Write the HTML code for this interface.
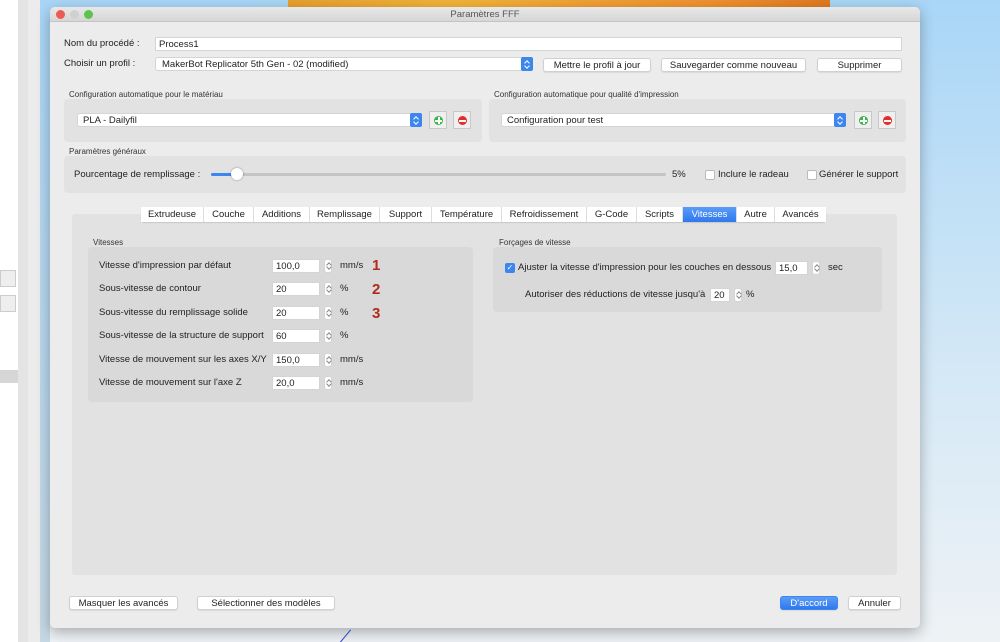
<!DOCTYPE html>
<html><head><meta charset="utf-8"><style>
*{box-sizing:border-box;margin:0;padding:0}
body{width:1000px;height:642px;overflow:hidden;position:relative;font-family:"Liberation Sans",sans-serif;font-size:9.5px;color:#222;background:linear-gradient(#a9d6f7,#d6e9f6 60%,#eef2f5)}
.a{position:absolute}
.t{position:absolute;white-space:nowrap;line-height:12px}
.inp{position:absolute;background:#fff;border:1px solid #d4d4d4;height:14px;padding-left:3px;line-height:13px}
.btn{position:absolute;background:#fff;border:1px solid #d0d0d0;border-radius:3px;height:14px;text-align:center;line-height:13px;box-shadow:0 1px 1px rgba(0,0,0,.08)}
.box{position:absolute;background:#e2e2e2;border-radius:4px}
.sm{font-size:8px;color:#333}
.spin{position:absolute;width:8px;height:14px;background:#fff;border:1px solid #d4d4d4;border-radius:3px}
.spin:before,.spin:after{content:"";position:absolute;left:1.5px;width:3px;height:3px;border-left:1px solid #888;border-top:1px solid #888}
.spin:before{top:3px;transform:rotate(45deg)}
.spin:after{bottom:3px;transform:rotate(225deg)}
.blu{position:absolute;width:12px;height:14px;background:#3d86f0;border-radius:2px}
.blu:before,.blu:after{content:"";position:absolute;left:4px;width:3px;height:3px;border-left:1px solid #fff;border-top:1px solid #fff}
.blu:before{top:3.5px;transform:rotate(45deg)}
.blu:after{bottom:3.5px;transform:rotate(225deg)}
.pm{position:absolute;width:18px;height:18px;border:1px solid #c8c8c8;background:#efefef}
.pm i{position:absolute;left:4px;top:4px;width:9px;height:9px;border-radius:50%}
.pm b{position:absolute;left:5px;top:8px;width:7px;height:1.5px;background:#fff}
.cb{position:absolute;width:10px;height:10px;background:#fff;border:1px solid #bbb;border-radius:2px}
.tab{position:absolute;top:207px;height:15px;background:#fff;border-right:1px solid #ddd;text-align:center;line-height:15px}
.red{position:absolute;color:#b22a1a;font-weight:bold;font-size:15px;line-height:15px}
</style></head><body>
<div class="a" style="left:0;top:0;width:18px;height:642px;background:#fff"></div>
<div class="a" style="left:0;top:270px;width:16px;height:17px;background:#eee;border:1px solid #ccc"></div>
<div class="a" style="left:0;top:295px;width:16px;height:17px;background:#eee;border:1px solid #ccc"></div>
<div class="a" style="left:0;top:370px;width:18px;height:13px;background:#d6d6d6"></div>
<div class="a" style="left:18px;top:0;width:10px;height:642px;background:#e4e4e4"></div>
<div class="a" style="left:28px;top:0;width:12px;height:642px;background:#ececec"></div>
<div class="a" style="left:40px;top:0;width:10px;height:642px;background:linear-gradient(#a9d6f7,#c6d8e4)"></div>
<div class="a" style="left:288px;top:0;width:542px;height:8px;background:linear-gradient(90deg,#e8a030,#f2b43a 30%,#f09030 80%,#e07a20)"></div>
<div class="a" style="left:50px;top:7px;width:870px;height:621px;background:#ececec;border-radius:5px;box-shadow:0 4px 14px rgba(0,0,0,.3);overflow:hidden">
 <div class="a" style="left:0;top:0;width:870px;height:15px;background:linear-gradient(#e8e8e8,#d6d6d6);border-bottom:1px solid #c4c4c4"></div>
 <div class="a" style="left:6px;top:3px;width:9px;height:9px;border-radius:50%;background:#ec5b53"></div>
 <div class="a" style="left:20px;top:3px;width:9px;height:9px;border-radius:50%;background:#d0d0d0"></div>
 <div class="a" style="left:34px;top:3px;width:9px;height:9px;border-radius:50%;background:#5cc44a"></div>
 <div class="t" style="left:0;width:870px;text-align:center;top:2px;color:#555">Paramètres FFF</div>
</div>
<div class="t" style="left:64px;top:38px">Nom du procédé :</div>
<div class="inp" style="left:155px;top:37px;width:747px">Process1</div>
<div class="t" style="left:64px;top:58px">Choisir un profil :</div>
<div class="inp" style="left:155px;top:57px;width:378px;border-radius:3px;padding-left:6px">MakerBot Replicator 5th Gen - 02 (modified)</div>
<div class="blu" style="left:521px;top:57px"></div>
<div class="btn" style="left:543px;top:58px;width:108px">Mettre le profil à jour</div>
<div class="btn" style="left:661px;top:58px;width:145px">Sauvegarder comme nouveau</div>
<div class="btn" style="left:817px;top:58px;width:85px">Supprimer</div>

<div class="t sm" style="left:69px;top:89px">Configuration automatique pour le matériau</div>
<div class="box" style="left:64px;top:99px;width:418px;height:43px"></div>
<div class="inp" style="left:77px;top:113px;width:345px;border-radius:3px;padding-left:5px">PLA - Dailyfil</div>
<div class="blu" style="left:410px;top:113px"></div>
<div class="pm" style="left:429px;top:111px"><i style="background:#3bb54a"></i><b></b><b style="left:8px;top:5px;width:1.5px;height:7px"></b></div>
<div class="pm" style="left:453px;top:111px"><i style="background:#e52b2b"></i><b></b></div>
<div class="t sm" style="left:494px;top:89px">Configuration automatique pour qualité d'impression</div>
<div class="box" style="left:489px;top:99px;width:417px;height:43px"></div>
<div class="inp" style="left:501px;top:113px;width:345px;border-radius:3px;padding-left:5px">Configuration pour test</div>
<div class="blu" style="left:834px;top:113px"></div>
<div class="pm" style="left:854px;top:111px"><i style="background:#3bb54a"></i><b></b><b style="left:8px;top:5px;width:1.5px;height:7px"></b></div>
<div class="pm" style="left:878px;top:111px"><i style="background:#e52b2b"></i><b></b></div>

<div class="t sm" style="left:69px;top:146px">Paramètres généraux</div>
<div class="box" style="left:64px;top:156px;width:842px;height:37px"></div>
<div class="t" style="left:74px;top:169px">Pourcentage de remplissage :</div>
<div class="a" style="left:211px;top:173px;width:455px;height:3px;background:#c4c4c4;border-radius:2px"></div>
<div class="a" style="left:211px;top:173px;width:26px;height:3px;background:#3d86f0;border-radius:2px"></div>
<div class="a" style="left:231px;top:168px;width:12px;height:12px;border-radius:50%;background:#fff;box-shadow:0 0 2px rgba(0,0,0,.4)"></div>
<div class="t" style="left:672px;top:169px">5%</div>
<div class="cb" style="left:705px;top:170px"></div>
<div class="t" style="left:718px;top:169px">Inclure le radeau</div>
<div class="cb" style="left:807px;top:170px"></div>
<div class="t" style="left:819px;top:169px">Générer le support</div>

<div class="box" style="left:72px;top:214px;width:825px;height:361px;border-radius:3px"></div>
<div class="a" style="left:141px;top:207px;width:685px;height:15px;background:#fff;border-radius:3px;box-shadow:0 1px 1px rgba(0,0,0,.12)"></div>
<div class="tab" style="left:141px;width:63px">Extrudeuse</div>
<div class="tab" style="left:204px;width:50px">Couche</div>
<div class="tab" style="left:254px;width:56px">Additions</div>
<div class="tab" style="left:310px;width:70px">Remplissage</div>
<div class="tab" style="left:380px;width:52px">Support</div>
<div class="tab" style="left:432px;width:70px">Température</div>
<div class="tab" style="left:502px;width:85px">Refroidissement</div>
<div class="tab" style="left:587px;width:50px">G-Code</div>
<div class="tab" style="left:637px;width:46px">Scripts</div>
<div class="tab" style="left:683px;width:54px;background:linear-gradient(#5a9cf6,#2f78ee);color:#fff">Vitesses</div>
<div class="tab" style="left:737px;width:38px">Autre</div>
<div class="tab" style="left:775px;width:51px;border:none">Avancés</div>

<div class="t sm" style="left:93px;top:237px">Vitesses</div>
<div class="box" style="left:88px;top:247px;width:385px;height:155px;background:#d9d9d9"></div>
<div class="t" style="left:99px;top:260px">Vitesse d'impression par défaut</div>
<div class="inp" style="left:272px;top:259px;width:48px">100,0</div><div class="spin" style="left:324px;top:259px"></div><div class="t" style="left:340px;top:260px">mm/s</div>
<div class="red" style="left:372px;top:258px">1</div>
<div class="t" style="left:99px;top:283px">Sous-vitesse de contour</div>
<div class="inp" style="left:272px;top:282px;width:48px">20</div><div class="spin" style="left:324px;top:282px"></div><div class="t" style="left:340px;top:283px">%</div>
<div class="red" style="left:372px;top:282px">2</div>
<div class="t" style="left:99px;top:307px">Sous-vitesse du remplissage solide</div>
<div class="inp" style="left:272px;top:306px;width:48px">20</div><div class="spin" style="left:324px;top:306px"></div><div class="t" style="left:340px;top:307px">%</div>
<div class="red" style="left:372px;top:306px">3</div>
<div class="t" style="left:99px;top:330px">Sous-vitesse de la structure de support</div>
<div class="inp" style="left:272px;top:329px;width:48px">60</div><div class="spin" style="left:324px;top:329px"></div><div class="t" style="left:340px;top:330px">%</div>
<div class="t" style="left:99px;top:354px">Vitesse de mouvement sur les axes X/Y</div>
<div class="inp" style="left:272px;top:353px;width:48px">150,0</div><div class="spin" style="left:324px;top:353px"></div><div class="t" style="left:340px;top:354px">mm/s</div>
<div class="t" style="left:99px;top:377px">Vitesse de mouvement sur l'axe Z</div>
<div class="inp" style="left:272px;top:376px;width:48px">20,0</div><div class="spin" style="left:324px;top:376px"></div><div class="t" style="left:340px;top:377px">mm/s</div>

<div class="t sm" style="left:499px;top:237px">Forçages de vitesse</div>
<div class="box" style="left:493px;top:247px;width:389px;height:65px;background:#d9d9d9"></div>
<div class="a" style="left:505px;top:263px;width:10px;height:10px;background:#3d86f0;border-radius:2px;color:#fff;font-size:8px;line-height:10px;text-align:center">✓</div>
<div class="t" style="left:518px;top:262px">Ajuster la vitesse d'impression pour les couches en dessous</div>
<div class="inp" style="left:775px;top:261px;width:33px">15,0</div><div class="spin" style="left:812px;top:261px"></div><div class="t" style="left:828px;top:262px">sec</div>
<div class="t" style="left:525px;top:289px">Autoriser des réductions de vitesse jusqu'à</div>
<div class="inp" style="left:710px;top:288px;width:20px">20</div><div class="spin" style="left:734px;top:288px"></div><div class="t" style="left:746px;top:289px">%</div>

<div class="btn" style="left:69px;top:596px;width:109px">Masquer les avancés</div>
<div class="btn" style="left:197px;top:596px;width:138px">Sélectionner des modèles</div>
<div class="btn" style="left:780px;top:596px;width:58px;background:linear-gradient(#5a9cf6,#2f78ee);color:#fff;border-color:#3d86f0">D'accord</div>
<div class="btn" style="left:848px;top:596px;width:53px">Annuler</div>
<div class="a" style="left:345px;top:628px;width:1px;height:16px;background:#3344cc;transform:rotate(40deg)"></div>
</body></html>
